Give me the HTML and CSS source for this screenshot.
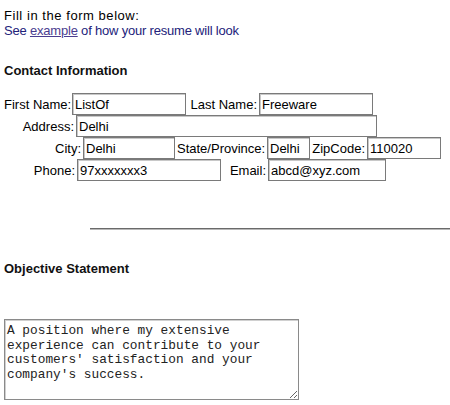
FILE: index.html
```html
<!DOCTYPE html>
<html lang="en">
<head>
  <meta charset="UTF-8">
  <title>Resume Builder - Contact Details</title>
  <link rel="stylesheet" href="styles.css">
</head>
<body>
  <div class="intro">
    <div class="intro-title">Fill in the form below:</div>
    <div class="intro-hint">See <a href="#">example</a> of how your resume will look</div>
  </div>

  <h3 class="section-title contact-title">Contact Information</h3>
  <form class="contact-form">
    <div class="form-row">
      <label class="lbl lbl-first">First Name:</label>
      <input class="fld fld-first" type="text" value="ListOf">
      <label class="lbl lbl-last">Last Name:</label>
      <input class="fld fld-last" type="text" value="Freeware">
    </div>
    <div class="form-row">
      <label class="lbl lbl-address">Address:</label>
      <input class="fld fld-address" type="text" value="Delhi">
    </div>
    <div class="form-row">
      <label class="lbl lbl-city">City:</label>
      <input class="fld fld-city" type="text" value="Delhi">
      <label class="lbl lbl-state">State/Province:</label>
      <input class="fld fld-state" type="text" value="Delhi">
      <label class="lbl lbl-zip">ZipCode:</label>
      <input class="fld fld-zip" type="text" value="110020">
    </div>
    <div class="form-row">
      <label class="lbl lbl-phone">Phone:</label>
      <input class="fld fld-phone" type="text" value="97xxxxxxx3">
      <label class="lbl lbl-email">Email:</label>
      <input class="fld fld-email" type="text" value="abcd@xyz.com">
    </div>
  </form>

  <div class="divider"></div>

  <h3 class="section-title objective-title">Objective Statement</h3>
  <textarea class="objective">A position where my extensive experience can contribute to your customers' satisfaction and your company's success.</textarea>
</body>
</html>
```

FILE: styles.css
```css
body {
  margin: 0;
  padding: 0 4px;
  font-family: 'Liberation Sans', Arial, sans-serif;
  font-size: 13px;
  line-height: 15px;
  color: #000;
  background: #fff;
}
.intro {
  padding-top: 8px;
}
.intro-title {
  letter-spacing: 0.55px;
}
.intro-hint {
  color: #22227a;
  letter-spacing: -0.2px;
}
.intro-hint a {
  color: #4a3d8f;
  text-decoration: underline;
}
.section-title {
  font-size: 13px;
  font-weight: bold;
  color: #111;
  margin: 0;
}
.contact-title {
  margin-top: 25px;
}
.contact-form {
  margin: 15px 0 0;
}
.form-row {
  display: flex;
  align-items: center;
  gap: 2px;
  height: 22px;
}
.lbl {
  text-align: right;
  white-space: nowrap;
}
.lbl-first { width: 66px; }
.lbl-last { width: 69px; }
.lbl-address { width: 70px; }
.lbl-city { width: 77px; }
.lbl-state { width: 88px; }
.lbl-zip { width: 53px; }
.lbl-phone { width: 71px; }
.lbl-email { width: 43px; }
.fld {
  box-sizing: border-box;
  height: 22px;
  margin: 0;
  padding: 0 2px;
  font-family: 'Liberation Sans', Arial, sans-serif;
  font-size: 13px;
  color: #000;
  background: #fff;
  border: 1px solid #7a7a7a;
  box-shadow: inset 1px 1px 0 #c8c8c8;
  outline: none;
}
.fld-first { width: 114px; }
.fld-last { width: 114px; }
.fld-address { width: 301px; }
.fld-city { width: 92px; }
.fld-state { width: 43px; }
.fld-zip { width: 74px; }
.fld-phone { width: 144px; }
.fld-email { width: 118px; }
.divider {
  margin: 47px -4px 0 86px;
  border-top: 1px solid #6a6a6a;
  border-bottom: 1px solid #b8b8b8;
}
.objective-title {
  margin-top: 31px;
}
.objective {
  display: block;
  box-sizing: border-box;
  width: 295px;
  height: 81px;
  margin-top: 43px;
  padding: 4px 2px 1px;
  font-family: 'Liberation Mono', 'Courier New', monospace;
  font-size: 12.8px;
  line-height: 14.5px;
  color: #222;
  border: 1px solid #8a8a8a;
  box-shadow: inset 1px 1px 0 #d0d0d0;
  outline: none;
}
```
